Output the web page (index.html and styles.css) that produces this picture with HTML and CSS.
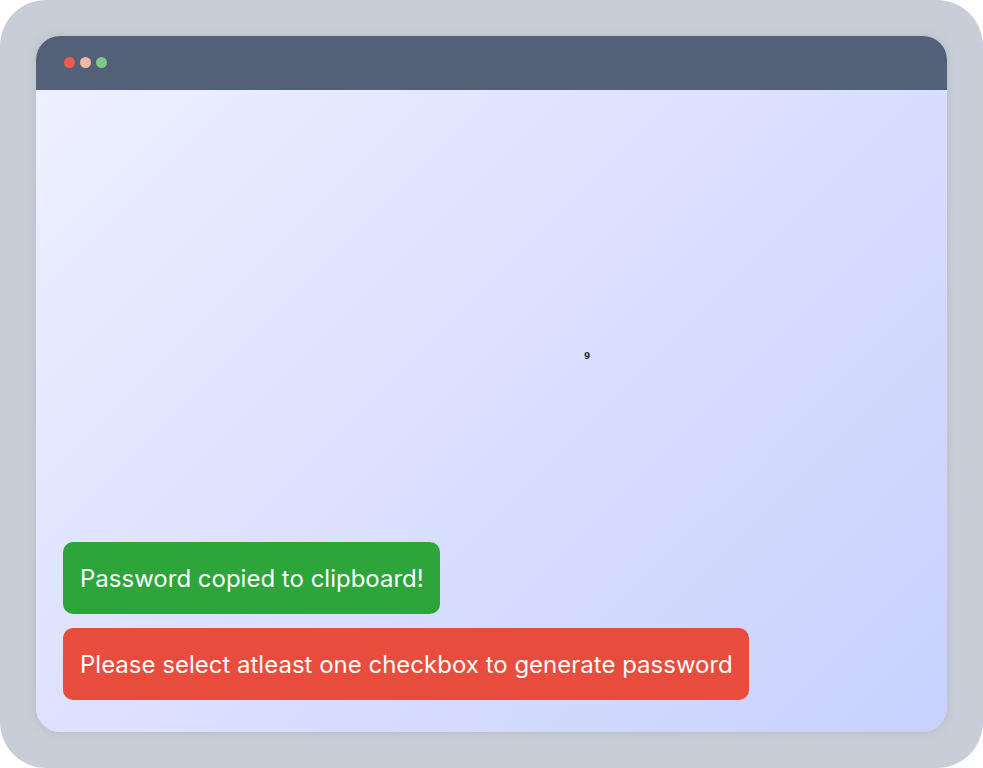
FILE: index.html
```html
<!DOCTYPE html>
<html>
<head>
<meta charset="utf-8">
<link rel="stylesheet" href="styles.css">
</head>
<body>
<div class="frame">
  <div class="window">
    <div class="titlebar">
      <span class="dot dot-red"></span>
      <span class="dot dot-yellow"></span>
      <span class="dot dot-green"></span>
    </div>
    <div class="content">
      <div class="stage"><span class="tiny">9</span></div>
      <div class="toasts">
        <div class="toast toast-success">Password copied to clipboard!</div>
        <div class="toast toast-error">Please select atleast one checkbox to generate password</div>
      </div>
    </div>
  </div>
</div>
</body>
</html>
```
FILE: styles.css
```css
html, body {
  margin: 0;
  padding: 0;
  background: #ffffff;
}
.frame {
  width: 983px;
  height: 768px;
  box-sizing: border-box;
  padding: 36px;
  background: #c8ced7;
  border-radius: 46px;
  display: flex;
}
.window {
  flex: 1;
  display: flex;
  flex-direction: column;
  border-radius: 24px;
  overflow: hidden;
  box-shadow: 0 0 10px rgba(90, 100, 120, 0.18);
}
.titlebar {
  height: 54px;
  box-sizing: border-box;
  flex: none;
  background: #526178;
  display: flex;
  align-items: center;
  gap: 5px;
  padding-left: 28px;
  padding-bottom: 2px;
}
.dot {
  width: 11px;
  height: 11px;
  border-radius: 50%;
}
.dot-red { background: #ee5c4f; }
.dot-yellow { background: #f3b8a6; }
.dot-green { background: #7ec98a; }
.content {
  flex: 1;
  display: flex;
  flex-direction: column;
  background: linear-gradient(135deg, #eef0fe 0%, #dbe1fe 45%, #c8d1fe 100%);
  padding: 0 27px 32px 27px;
}
.stage {
  flex: 1;
  padding-top: 261px;
  padding-left: 521px;
}
.tiny {
  font-family: "DejaVu Sans", sans-serif;
  font-weight: bold;
  font-size: 9px;
  color: #2a3140;
  line-height: 11px;
  display: block;
}
.toasts {
  display: flex;
  flex-direction: column;
  align-items: flex-start;
  gap: 14px;
}
.toast {
  height: 72px;
  box-sizing: border-box;
  display: flex;
  align-items: center;
  padding: 0 16px 0 17px;
  border-radius: 10px;
  color: #ffffff;
  font-family: Inter, "Noto Sans", sans-serif;
  font-size: 24px;
}
.toast-success { background: #2ea53a; }
.toast-error { background: #e74c3c; }
```
